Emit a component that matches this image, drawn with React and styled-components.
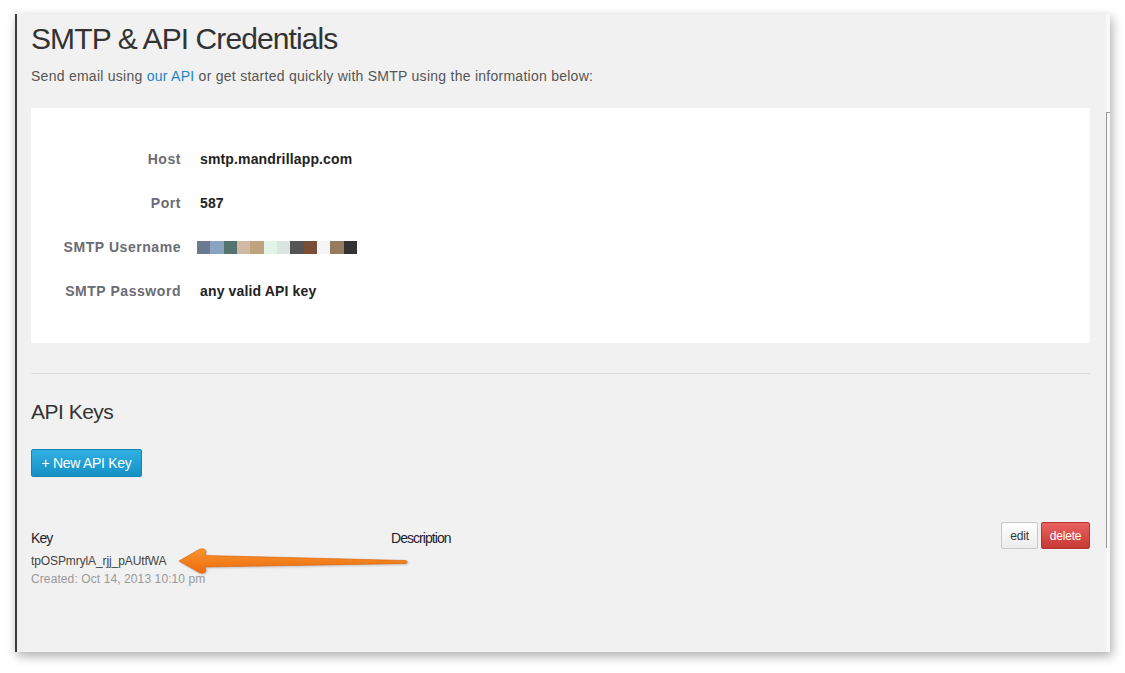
import React from "react";
import styled, { createGlobalStyle } from "styled-components";

const GlobalStyle = createGlobalStyle`
  html, body {
    margin: 0;
    padding: 0;
    background: #ffffff;
  }
  body {
    font-family: "Liberation Sans", Arial, sans-serif;
  }
  * {
    box-sizing: border-box;
  }
`;

const credentials = [
  { label: "Host", value: "smtp.mandrillapp.com" },
  { label: "Port", value: "587" },
  { label: "SMTP Username", blurred: true },
  { label: "SMTP Password", value: "any valid API key" },
];

const blurColors = [
  "#6b7a8f",
  "#88a4c0",
  "#557470",
  "#d0b9a5",
  "#bfa27e",
  "#e0f5e8",
  "#d8e5e0",
  "#555555",
  "#7a4e35",
  "#f4f5f6",
  "#957c5f",
  "#333333",
];

function OrangeArrow() {
  return (
    <ArrowSvg viewBox="160 540 260 40" width="260" height="40">
      <defs>
        <linearGradient id="arrowFill" x1="0" y1="0" x2="0" y2="1">
          <stop offset="0" stopColor="#f9962e" />
          <stop offset="1" stopColor="#ec6a0c" />
        </linearGradient>
      </defs>
      <path
        d="M179 561 L199 549.5 Q204 547.5 206 551 L205 555.5 L406 560.5 Q408.5 562 406 563.5 L205 567 L206 571 Q204 574.5 199 572.5 Z"
        fill="url(#arrowFill)"
        stroke="#d85f08"
        strokeWidth="0.6"
      />
    </ArrowSvg>
  );
}

function App() {
  return (
    <>
      <GlobalStyle />
      <Stage>
        <Window>
          <Content>
            <Title>SMTP &amp; API Credentials</Title>
            <Intro>
              Send email using <a href="#api">our API</a> or get started
              quickly with SMTP using the information below:
            </Intro>
            <InfoPanel>
              {credentials.map((row) => (
                <InfoRow key={row.label}>
                  <InfoLabel>{row.label}</InfoLabel>
                  {row.blurred ? (
                    <Pixelated>
                      {blurColors.map((c, i) => (
                        <Pixel key={i} $color={c} />
                      ))}
                    </Pixelated>
                  ) : (
                    <InfoValue>{row.value}</InfoValue>
                  )}
                </InfoRow>
              ))}
            </InfoPanel>
            <Divider />
            <SubTitle>API Keys</SubTitle>
            <PrimaryButton>+ New API Key</PrimaryButton>
            <KeyRow>
              <KeyCell>
                <ColumnHead>Key</ColumnHead>
                <KeyValue>tpOSPmrylA_rjj_pAUtfWA</KeyValue>
                <KeyMeta>Created: Oct 14, 2013 10:10 pm</KeyMeta>
              </KeyCell>
              <DescCell>
                <ColumnHead>Description</ColumnHead>
              </DescCell>
              <Actions>
                <SmallButton>edit</SmallButton>
                <SmallButton $danger>delete</SmallButton>
              </Actions>
            </KeyRow>
            <OrangeArrow />
          </Content>
          <ScrollTrack>
            <ScrollThumb />
          </ScrollTrack>
        </Window>
      </Stage>
    </>
  );
}

const Stage = styled.div`
  width: 1125px;
  height: 673px;
  padding: 14px 0 0 15px;
`;

const Window = styled.div`
  position: relative;
  display: flex;
  width: 1095px;
  height: 638px;
  background: #f1f1f1;
  border-left: 2px solid #3c3c3c;
  box-shadow: 2px 4px 10px rgba(0, 0, 0, 0.32);
`;

const Content = styled.div`
  position: relative;
  flex: 1;
  padding: 8px 16px 0 14px;
  color: #333;
`;

const Title = styled.h1`
  margin: 0;
  font-size: 30px;
  line-height: 33px;
  font-weight: normal;
  color: #333;
  letter-spacing: -0.9px;
`;

const Intro = styled.p`
  margin: 11px 0 0;
  font-size: 14px;
  line-height: 20px;
  color: #555;
  letter-spacing: 0.26px;

  a {
    color: #1a84c4;
    text-decoration: none;
  }
`;

const InfoPanel = styled.div`
  margin-top: 22px;
  background: #ffffff;
  padding: 29px 0 30px;
`;

const InfoRow = styled.div`
  display: flex;
  align-items: center;
  height: 44px;
`;

const InfoLabel = styled.div`
  width: 150px;
  text-align: right;
  font-size: 14px;
  font-weight: bold;
  color: #6a6c74;
  letter-spacing: 0.55px;
`;

const InfoValue = styled.div`
  margin-left: 19px;
  font-size: 14px;
  font-weight: bold;
  color: #222;
  letter-spacing: 0.15px;
`;

const Pixelated = styled.div`
  display: flex;
  margin-left: 16px;
  margin-top: 1px;
`;

const Pixel = styled.span`
  display: block;
  width: 13.33px;
  height: 13px;
  background: ${(p) => p.$color};
`;

const Divider = styled.hr`
  margin: 30px 0 0;
  border: 0;
  border-top: 1px solid #dcdcdc;
  height: 0;
`;

const SubTitle = styled.h2`
  margin: 25px 0 0;
  font-size: 21px;
  line-height: 26px;
  font-weight: normal;
  color: #333;
  letter-spacing: -0.5px;
`;

const PrimaryButton = styled.button`
  display: block;
  margin-top: 24px;
  height: 28px;
  width: 111px;
  padding: 0;
  font-family: inherit;
  font-size: 14px;
  letter-spacing: -0.3px;
  color: #fff;
  background: linear-gradient(#30b0e2, #1590c5);
  border: 1px solid #1683b7;
  border-radius: 2px;
  cursor: pointer;
`;

const KeyRow = styled.div`
  display: flex;
  align-items: flex-start;
  margin-top: 45px;
`;

const KeyCell = styled.div`
  width: 360px;
  padding-top: 8px;
`;

const DescCell = styled.div`
  flex: 1;
  padding-top: 8px;
`;

const ColumnHead = styled.div`
  font-size: 14px;
  line-height: 16px;
  color: #1f2230;
  letter-spacing: -0.95px;
`;

const KeyValue = styled.div`
  margin-top: 7px;
  font-size: 12px;
  line-height: 16px;
  color: #444;
  letter-spacing: -0.1px;
`;

const KeyMeta = styled.div`
  margin-top: 2px;
  font-size: 12px;
  line-height: 16px;
  color: #999;
  letter-spacing: 0.1px;
`;

const Actions = styled.div`
  display: flex;
  gap: 3px;
`;

const SmallButton = styled.button`
  height: 27px;
  width: ${(p) => (p.$danger ? "49px" : "37px")};
  padding: 0;
  font-family: inherit;
  font-size: 12px;
  letter-spacing: -0.2px;
  color: ${(p) => (p.$danger ? "#fff" : "#333")};
  background: ${(p) =>
    p.$danger
      ? "linear-gradient(#e9625f, #c73935)"
      : "linear-gradient(#ffffff, #ececec)"};
  border: 1px solid ${(p) => (p.$danger ? "#b8322f" : "#c8c8c8")};
  border-radius: 2px;
  cursor: pointer;
`;

const ArrowSvg = styled.svg`
  position: absolute;
  left: 143px;
  top: 526px;
  overflow: visible;
  filter: drop-shadow(1px 1px 1px rgba(0, 0, 0, 0.2));
`;

const ScrollTrack = styled.div`
  width: 4px;
  background: #f8f8f8;
`;

const ScrollThumb = styled.div`
  margin-top: 98px;
  height: 436px;
  border-left: 1px solid #9a9a9a;
  border-top: 1px solid #9a9a9a;
`;

export default App;
